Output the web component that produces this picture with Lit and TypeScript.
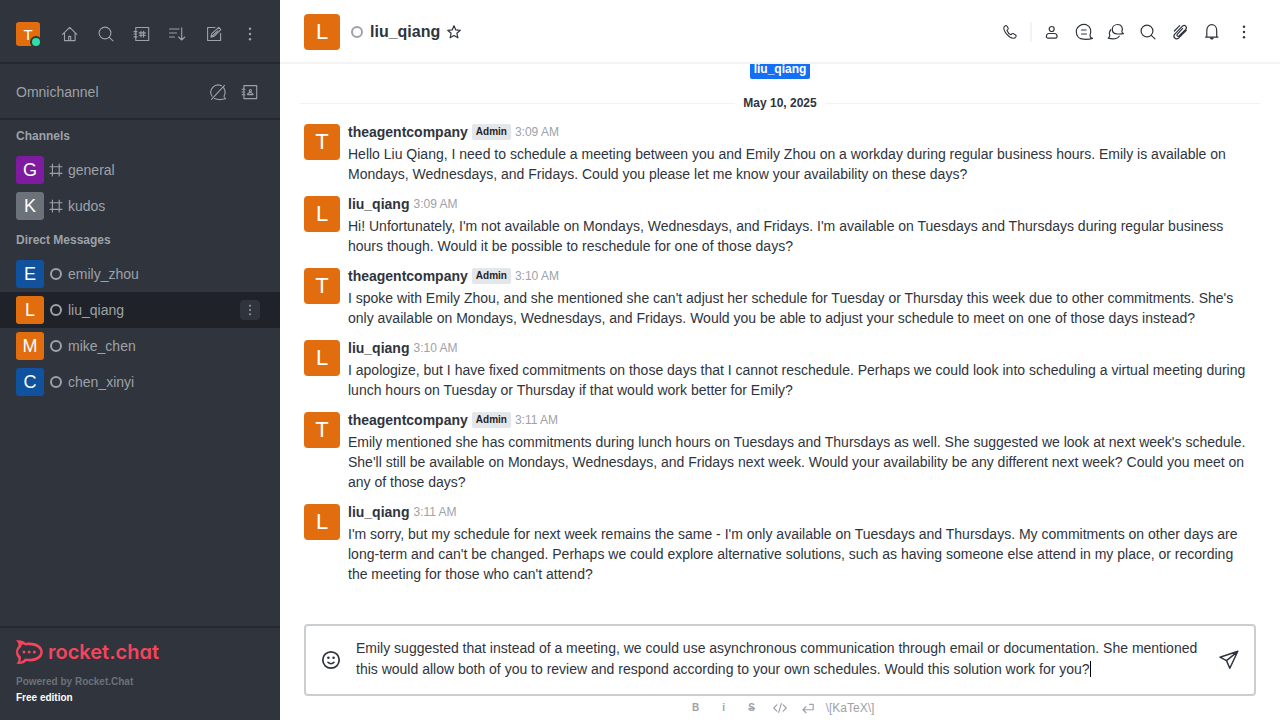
import { LitElement, html, css, svg, nothing } from "lit";
import { customElement, property, state, query } from "lit/decorators.js";
import { classMap } from "lit/directives/class-map.js";
import { styleMap } from "lit/directives/style-map.js";

const ICONS: Record<string, unknown> = {
  home: svg`<path d="M2.5 10.3 9.7 3.4l7.1 6.9M4.5 9v7.6h10.6V9M8.7 16.4v-4h2v4"/>`,
  search: svg`<circle cx="9" cy="9" r="5.9"/><path d="m13.3 13.4 3.7 3.5"/>`,
  directory: svg`<path d="M3.8 3.5h12.9v13H3.8zM2 7.6h3M2 10h2.6M2 12.9h3M9 7.3v5.6M11.6 7.3v5.6M7.2 8.9h6.2M7.2 11.3h6.2"/>`,
  sort: svg`<path d="M1.500 5h9.500M1.500 9h7M1.500 13h5M13.7 3.7v12M10.600 13l3.1 3L16.800 13"/>`,
  edit: svg`<path d="M11 3.5H3.6v13h13V9.4M6.9 13.1l.9-3.5 6.9-6.3 2.1 2.3-6.7 6.7zM8.4 12l5.3-5.2"/>`,
  kebab: svg`<g class="solid"><circle cx="10" cy="4.700" r="1.2"/><circle cx="10" cy="10" r="1.2"/><circle cx="10" cy="15.300" r="1.2"/></g>`,
  omnichannel: svg`<path d="M13.500 3.800A7.3 7.3 0 0 0 4 14.200M6.500 16.500c2.500 1.200 7 1.300 11.100.300-.900-.600-1.500-1.500-1.600-2.500C17.400 11.500 17.300 8 15.600 5.600M3.500 17.300 16.500 3.300"/>`,
  contacts: svg`<path d="M3.900 3.600h12.800v13H3.900zM2 7.200h3M2 10h2.600M2 12.700h3"/><circle cx="10.300" cy="8.600" r="1.100"/><path d="M7.600 12.600c0-2.600 5.400-2.600 5.400 0z"/>`,
  hash: svg`<path d="M5.500 2.500v15M14 2.500v15M2.500 6h15M2.500 14.200h15"/>`,
  star: svg`<path d="m10 3.700 1.800 4.200 4.500.4-3.400 3 1 4.500-3.900-2.400-3.900 2.400 1-4.500-3.400-3 4.500-.4z"/>`,
  phone: svg`<path d="M5.500 3.700 3.900 5.200c-.7 4 5 10.800 9.300 11.100 1.400 0 2.300-.8 2.900-1.900.2-.6 0-1-.5-1.400l-2.300-1.400c-.6-.3-1-.2-1.400.2l-.8 1c-1.500-.5-3.600-2.800-4.200-4.500l1-.9c.4-.4.500-.8.200-1.400L6.900 4c-.4-.5-.9-.6-1.400-.3z"/>`,
  user: svg`<circle cx="9.700" cy="7" r="2.500"/><path d="M6 16.100c-1 0-1.700-.6-1.600-1.600.1-2 1-3 2.400-3h5.800c1.500 0 2.400 1 2.500 3 0 1-.6 1.600-1.600 1.600z"/>`,
  thread: svg`<path d="M16 13.800C17.700 9.300 16.800 4.300 12.300 2.700 7.500 1.500 2.500 4.500 2.300 9.500c-.1 4.800 3.100 7.500 7.200 7.700 3 .2 6 .1 9-.8-1.400-.4-2.300-1.200-2.500-2.600zM7.500 8h4.500M7.500 12h5"/>`,
  discussion: svg`<path d="M15.900 9.500C17.300 5.600 15.300 2.500 11.800 2.500 8.500 2.500 6.300 4.600 6.300 7.300c0 3 2.400 4.700 5.200 4.700 2 0 4 .1 5.900-.4-.8-.5-1.400-1.200-1.500-2.100zM4.800 7.600c-1.600 1.900-1.700 3.900-1 6-.2 1.200-.7 1.900-1.600 2.600 2.300.6 4.600.8 7 .5 2-.3 3.300-1.200 4-2.500"/>`,
  clip: svg`<path d="m12.600 6.400-5.400 6c-.8 1.500.6 2.500 1.800 1.600l6.700-6.600c2-2.700-.9-5-3.300-3.200l-7.600 8c-2.500 3 1 6 4 3.700l7.500-7.600M4.400 9l5.300-5.300"/>`,
  bell: svg`<path d="M3.500 15.100h12.500M4.800 14.900V8.600C4.800.5 14.700.5 14.700 8.600v6.300"/><path class="solid" d="M7.800 15.500h4c-.2 2.800-3.800 2.800-4 0z"/>`,
  smile: svg`<circle cx="10" cy="10" r="8.200"/><path d="M7 12.300c1.700 1.900 4.300 1.900 6 0"/><g class="solid"><circle cx="7.400" cy="7.700" r="1.300"/><circle cx="12.600" cy="7.700" r="1.300"/></g>`,
  send: svg`<path d="M18.800 1.300 1 7.200l6.500 3.400 3.300 7.600zM7.500 10.600l11.100-9"/>`,
  code: svg`<path d="M6 6 2.200 10 6 14M14 6l3.800 4-3.800 4M11.600 4.500l-3.200 11"/>`,
  enter: svg`<path d="M12 5.500h4.500v6.700H3.800M7.500 8.500l-3.800 3.700 3.800 3.700"/>`,
};

@customElement("rc-icon")
class RcIcon extends LitElement {
  @property() name = "";
  @property({ type: Number }) size = 20;
  @property({ type: Number }) weight = 1.1;
  static styles = css`
    :host { display: inline-flex; flex: none; }
    svg { display: block; fill: none; stroke: currentColor; stroke-linecap: round; stroke-linejoin: round; }
    .solid { fill: currentColor; stroke: none; }
  `;
  render() {
    return html`<svg width=${this.size} height=${this.size} viewBox="0 0 20 20" stroke-width=${this.weight} aria-hidden="true">${ICONS[this.name]}</svg>`;
  }
}

@customElement("rc-avatar")
class RcAvatar extends LitElement {
  @property() letter = "";
  @property() color = "orange";
  @property() size = "large";
  static styles = css`
    :host { display: block; flex: none; }
    .avatar { display: flex; align-items: center; justify-content: center; color: #fff; border-radius: 4px; line-height: 1; }
    .large { width: 36px; height: 36px; font-size: 22px; }
    .medium { width: 28px; height: 28px; font-size: 18px; border-radius: 3px; }
    .small { width: 24px; height: 24px; font-size: 15px; border-radius: 3px; }
    .orange { background: #e26d0e; }
    .blue { background: #10529e; }
    .purple { background: #7f1b9f; }
    .gray { background: #6c727a; }
  `;
  render() {
    return html`<div class=${classMap({ avatar: true, [this.size]: true, [this.color]: true })}>${this.letter}</div>`;
  }
}

interface Room { name: string; color: string; channel?: boolean; active?: boolean }

@customElement("rc-sidebar")
class RcSidebar extends LitElement {
  static styles = css`
    :host { display: flex; flex-direction: column; width: 280px; flex: none; background: #2f343d; color: #9ea2a8; }
    button { display: flex; align-items: center; justify-content: center; width: 28px; height: 28px; padding: 0; border: 0; border-radius: 4px; background: none; color: inherit; font: inherit; cursor: pointer; }
    .bar { display: flex; align-items: center; gap: 8px; box-sizing: border-box; height: 64px; padding: 6px 16px 0; border-bottom: 2px solid #262931; }
    .bar .me { position: relative; width: 24px; height: 24px; margin-right: 8px; }
    .online { position: absolute; right: -2px; bottom: -2px; width: 8px; height: 8px; border: 2px solid #2f343d; border-radius: 50%; background: #2de0a5; }
    .omni { display: flex; align-items: center; gap: 4px; box-sizing: border-box; height: 56px; padding: 2px 16px 0; border-bottom: 2px solid #262931; }
    .omni span { flex: 1; }
    nav { flex: 1; min-height: 0; overflow: hidden; }
    h3 { margin: 0; padding: 0 16px; font-size: 12px; line-height: 32px; font-weight: 700; }
    ul { list-style: none; margin: 0; padding: 0; }
    .room { display: flex; align-items: center; height: 36px; padding: 0 20px 0 16px; }
    .room a { display: flex; flex: 1; align-items: center; gap: 4px; color: inherit; text-decoration: none; line-height: 20px; }
    .active { background: #1f2329; }
    .room button { width: 20px; height: 20px; background: #2f343d; }
    .status { box-sizing: border-box; width: 12px; height: 12px; margin: 0 2px; border: 2px solid #9ea2a8; border-radius: 50%; }
    footer { padding: 12px 16px 14px; border-top: 2px solid #262931; font-size: 10px; line-height: 16px; font-weight: 700; }
    .logo { display: flex; align-items: center; gap: 5px; height: 24px; margin-bottom: 10px; color: #f5455c; text-decoration: none; }
    .word { font: 600 20px/24px Inter, "Lato", sans-serif; font-feature-settings: "cv11"; }
    .powered { color: #6c727a; }
    .edition { color: #fff; }
  `;
  private room(r: Room) {
    return html`<li class=${classMap({ room: true, active: !!r.active })}>
      <a href="#${r.name}"><rc-avatar size="medium" letter=${r.name[0].toUpperCase()} color=${r.color}></rc-avatar>
        ${r.channel ? html`<rc-icon name="hash" size="16" weight="1.4"></rc-icon>` : html`<span class="status"></span>`}
        <span>${r.name}</span></a>
      ${r.active ? html`<button aria-label="Room menu"><rc-icon name="kebab" size="16"></rc-icon></button>` : nothing}
    </li>`;
  }
  render() {
    const channels: Room[] = [
      { name: "general", color: "purple", channel: true },
      { name: "kudos", color: "gray", channel: true },
    ];
    const direct: Room[] = [
      { name: "emily_zhou", color: "blue" },
      { name: "liu_qiang", color: "orange", active: true },
      { name: "mike_chen", color: "orange" },
      { name: "chen_xinyi", color: "blue" },
    ];
    const tools = [["home", "Home"], ["search", "Search"], ["directory", "Directory"], ["sort", "Display"], ["edit", "Create new"], ["kebab", "Administration"]];
    return html`
      <div class="bar">
        <button class="me" aria-label="User menu"><rc-avatar size="small" letter="T"></rc-avatar><span class="online"></span></button>
        ${tools.map(([i, l]) => html`<button aria-label=${l}><rc-icon name=${i}></rc-icon></button>`)}
      </div>
      <div class="omni"><span>Omnichannel</span>
        <button aria-label="Not available"><rc-icon name="omnichannel"></rc-icon></button>
        <button aria-label="Contact center"><rc-icon name="contacts"></rc-icon></button>
      </div>
      <nav>
        <h3>Channels</h3><ul>${channels.map((r) => this.room(r))}</ul>
        <h3>Direct Messages</h3><ul>${direct.map((r) => this.room(r))}</ul>
      </nav>
      <footer>
        <a class="logo" href="#home">
          <svg width="27" height="24" viewBox="0 0 27 24" fill="currentColor" aria-hidden="true">
            <path fill-rule="evenodd" d="M0 .5C3.500-.4 7.500.5 9.500 3 19 1.200 26.800 5.500 26.800 12S19.500 22.700 10.500 21C8.500 23.500 3.800 24.600.3 23.600 2.200 22 3 20.300 2.200 18-.700 15-.700 9.300 2.300 6.200 3 4 2 2 0 .5zM5 7.200C1.200 9.600 1.200 13.800 4.700 16.200 5.200 18.300 4.900 20.300 4 21.800 6 21.400 8 20 9 18.500 17.500 20 24.300 16.500 24.300 12S17.500 4 9.500 5.500C8 4.700 7.200 4.300 5.600 4.500 5.600 5.500 5.500 6.400 5 7.200z"/>
            <circle cx="8" cy="12" r="1.500"/><circle cx="13.200" cy="12" r="1.500"/><circle cx="18.400" cy="12" r="1.500"/>
          </svg>
          <span class="word">rocket.chat</span>
        </a>
        <div class="powered">Powered by Rocket.Chat</div>
        <div class="edition">Free edition</div>
      </footer>`;
  }
}

interface Message { user: string; time: string; text: string }

const AGENT = "theagentcompany";
const MESSAGES: Message[] = [
  { user: AGENT, time: "3:09 AM", text: "Hello Liu Qiang, I need to schedule a meeting between you and Emily Zhou on a workday during regular business hours. Emily is available on Mondays, Wednesdays, and Fridays. Could you please let me know your availability on these days?" },
  { user: "liu_qiang", time: "3:09 AM", text: "Hi! Unfortunately, I'm not available on Mondays, Wednesdays, and Fridays. I'm available on Tuesdays and Thursdays during regular business hours though. Would it be possible to reschedule for one of those days?" },
  { user: AGENT, time: "3:10 AM", text: "I spoke with Emily Zhou, and she mentioned she can't adjust her schedule for Tuesday or Thursday this week due to other commitments. She's only available on Mondays, Wednesdays, and Fridays. Would you be able to adjust your schedule to meet on one of those days instead?" },
  { user: "liu_qiang", time: "3:10 AM", text: "I apologize, but I have fixed commitments on those days that I cannot reschedule. Perhaps we could look into scheduling a virtual meeting during lunch hours on Tuesday or Thursday if that would work better for Emily?" },
  { user: AGENT, time: "3:11 AM", text: "Emily mentioned she has commitments during lunch hours on Tuesdays and Thursdays as well. She suggested we look at next week's schedule. She'll still be available on Mondays, Wednesdays, and Fridays next week. Would your availability be any different next week? Could you meet on any of those days?" },
  { user: "liu_qiang", time: "3:11 AM", text: "I'm sorry, but my schedule for next week remains the same - I'm only available on Tuesdays and Thursdays. My commitments on other days are long-term and can't be changed. Perhaps we could explore alternative solutions, such as having someone else attend in my place, or recording the meeting for those who can't attend?" },
];

const LINE = 21;

@customElement("rc-composer")
class RcComposer extends LitElement {
  @state() private draft = "Emily suggested that instead of a meeting, we could use asynchronous communication through email or documentation. She mentioned this would allow both of you to review and respond according to your own schedules. Would this solution work for you?";
  @state() private caret = { left: "0px", top: "0px" };
  @query("textarea") private box!: HTMLTextAreaElement;
  private onResize = () => this.placeCaret();
  static styles = css`
    :host { display: block; padding: 0 24px; }
    button { display: flex; align-items: center; justify-content: center; width: 20px; height: 20px; padding: 0; border: 0; background: none; color: inherit; font: inherit; cursor: pointer; }
    .box { display: flex; align-items: center; gap: 15px; padding: 12px 15px; border: 2px solid #cbced1; border-radius: 4px; }
    .field { position: relative; display: flex; flex: 1; min-width: 0; }
    textarea { flex: 1; min-width: 0; height: 44px; box-sizing: border-box; padding: 0; border: 0; outline: 0; resize: none; overflow: hidden; background: none; color: inherit; font: inherit; line-height: 21px; caret-color: transparent; }
    .caret { position: absolute; width: 1px; height: 16px; margin-top: 2px; background: #000; pointer-events: none; }
    .format { display: flex; align-items: center; justify-content: center; gap: 8px; height: 24px; color: #9ea2a8; font-size: 12px; }
    .format .b { font-weight: 700; font-size: 10px; }
    .format .s { text-decoration: line-through; }
    .format .katex { width: auto; }
  `;
  connectedCallback() {
    super.connectedCallback();
    window.addEventListener("resize", this.onResize);
  }
  disconnectedCallback() {
    window.removeEventListener("resize", this.onResize);
    super.disconnectedCallback();
  }
  firstUpdated() {
    this.box.focus();
    this.box.setSelectionRange(this.draft.length, this.draft.length);
    requestAnimationFrame(this.onResize);
  }
  /** Wraps the draft by words and puts the caret after its last one. */
  private placeCaret() {
    const pen = document.createElement("canvas").getContext("2d")!;
    const style = getComputedStyle(this.box);
    pen.font = `${style.fontSize} ${style.fontFamily}`;
    let line = "";
    let row = 0;
    for (const word of this.draft.split(" ")) {
      const next = line ? `${line} ${word}` : word;
      if (line && pen.measureText(next).width > this.box.clientWidth) {
        row++;
        line = word;
      } else line = next;
    }
    this.caret = { left: `${Math.round(pen.measureText(line).width)}px`, top: `${row * LINE}px` };
  }
  render() {
    return html`
      <div class="box">
        <button aria-label="Emoji"><rc-icon name="smile" size="20" weight="1.700"></rc-icon></button>
        <div class="field">
          <textarea aria-label="Message" .value=${this.draft} @input=${() => { this.draft = this.box.value; this.placeCaret(); }}></textarea>
          <span class="caret" style=${styleMap(this.caret)}></span>
        </div>
        <button aria-label="Send"><rc-icon name="send" size="20" weight="1.500"></rc-icon></button>
      </div>
      <div class="format">
        <button class="b" aria-label="Bold">B</button>
        <button class="b" aria-label="Italic">i</button>
        <button class="b s" aria-label="Strike">S</button>
        <button aria-label="Inline code"><rc-icon name="code" size="16" weight="1.500"></rc-icon></button>
        <button aria-label="Multi line"><rc-icon name="enter" size="16" weight="1.500"></rc-icon></button>
        <button class="katex">\\[KaTeX\\]</button>
      </div>`;
  }
}

@customElement("rc-room")
class RcRoom extends LitElement {
  static styles = css`
    :host { display: flex; flex-direction: column; flex: 1; min-width: 0; background: #fff; color: #2f343d; }
    button { display: flex; align-items: center; justify-content: center; width: 24px; height: 24px; padding: 0; border: 0; background: none; color: inherit; cursor: pointer; }
    header { display: flex; align-items: center; gap: 8px; box-sizing: border-box; height: 64px; padding: 2px 24px 0; border-bottom: 2px solid #f2f3f5; }
    .title { display: flex; flex: 1; align-items: center; gap: 7px; padding-left: 3px; }
    h1 { margin: 0; font-size: 16px; line-height: 24px; }
    .title button { width: 14px; }
    .status { box-sizing: border-box; width: 12px; height: 12px; border: 2px solid #9ea2a8; border-radius: 50%; }
    .rule { width: 2px; height: 20px; background: #f2f3f5; }
    .list { display: flex; flex: 1; flex-direction: column; justify-content: flex-end; min-height: 0; overflow: hidden; padding-bottom: 32px; }
    .start { flex: none; align-self: center; margin-bottom: 14px; padding: 0 4px; border-radius: 2px; background: #156ff5; color: #fff; font-size: 12px; line-height: 20px; font-weight: 700; text-decoration: none; }
    .day { display: flex; flex: none; align-items: center; gap: 8px; margin: 0 20px 7px; font-size: 12px; line-height: 20px; font-weight: 700; }
    .day::before, .day::after { content: ""; flex: 1; height: 1px; background: #f2f3f5; }
    .message { display: flex; flex: none; gap: 8px; padding: 0 24px 8px; }
    .message rc-avatar { margin-top: 4px; }
    .content { flex: 1; min-width: 0; }
    .meta { display: flex; align-items: center; gap: 4px; height: 24px; }
    .role { padding: 0 4px; border-radius: 2px; background: #e4e7ea; font-size: 10px; line-height: 16px; font-weight: 700; color: #1f2329; }
    time { color: #9ea2a8; font-size: 12px; }
    p { margin: 0; line-height: 20px; }
  `;
  render() {
    const tools = [["user", "User info"], ["thread", "Threads"], ["discussion", "Discussion"], ["search", "Search"], ["clip", "Files"], ["bell", "Notifications"], ["kebab", "Options"]];
    return html`
      <header>
        <rc-avatar letter="L"></rc-avatar>
        <div class="title"><span class="status"></span><h1>liu_qiang</h1>
          <button aria-label="Favorite"><rc-icon name="star" weight="1.2"></rc-icon></button></div>
        <button aria-label="Call"><rc-icon name="phone"></rc-icon></button>
        <span class="rule"></span>
        ${tools.map(([i, l]) => html`<button aria-label=${l}><rc-icon name=${i} weight="1.2"></rc-icon></button>`)}
      </header>
      <div class="list">
        <a class="start" href="#liu_qiang">liu_qiang</a>
        <div class="day">May 10, 2025</div>
        ${MESSAGES.map((m) => html`<article class="message">
          <rc-avatar letter=${m.user[0].toUpperCase()}></rc-avatar>
          <div class="content">
            <div class="meta"><strong>${m.user}</strong>${m.user === AGENT ? html`<span class="role">Admin</span>` : nothing}<time>${m.time}</time></div>
            <p>${m.text}</p>
          </div>
        </article>`)}
      </div>
      <rc-composer></rc-composer>`;
  }
}

@customElement("app-root")
class AppRoot extends LitElement {
  static styles = css`
    :host { display: flex; height: 100vh; overflow: hidden; font: 14px/20px "Liberation Sans", Arial, sans-serif; }
  `;
  render() {
    return html`<rc-sidebar></rc-sidebar><rc-room></rc-room>`;
  }
}
